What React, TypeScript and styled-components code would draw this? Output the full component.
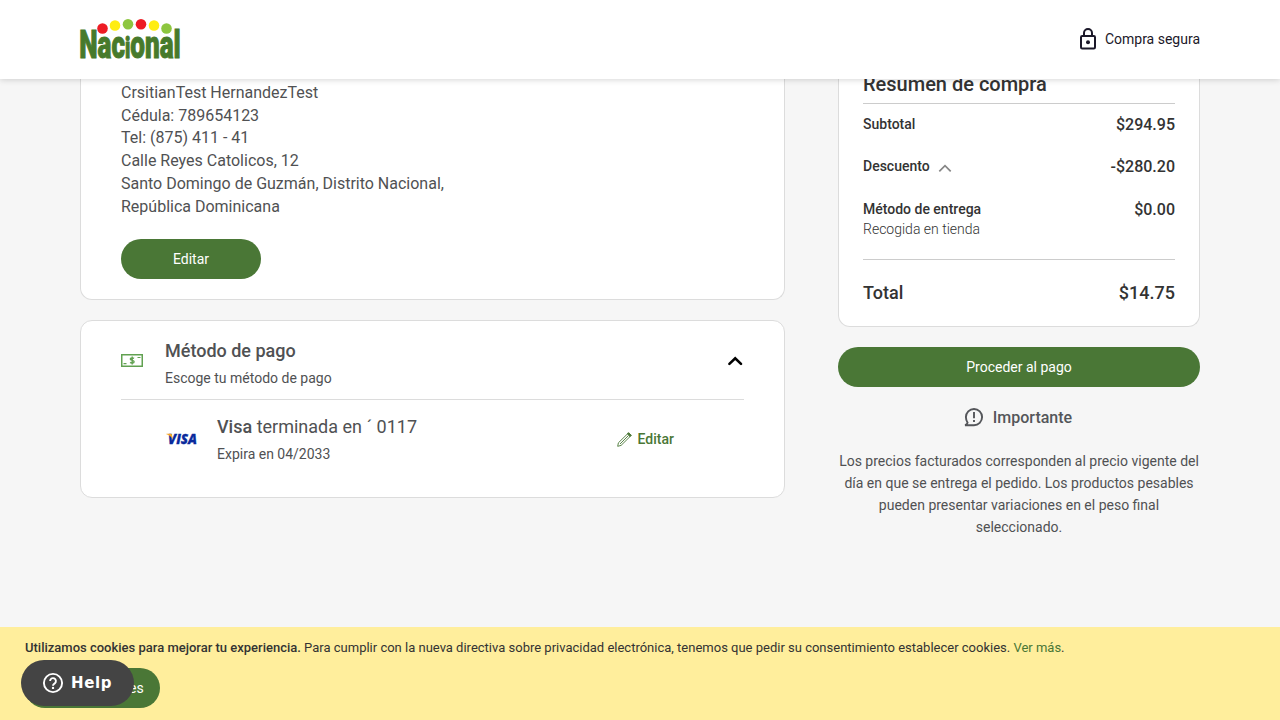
import React from 'react';
import styled, { createGlobalStyle } from 'styled-components';

const green = '#4a7736';

const GlobalStyle = createGlobalStyle`
  * { box-sizing: border-box; }
  body { margin: 0; background: #f6f6f6; color: #333; font-family: Roboto, sans-serif; font-size: 14px; }
  p, h2, h3 { margin: 0; }
  button { font: inherit; border: 0; padding: 0; cursor: pointer; }
`;

const Page = styled.div`
  height: 720px;
  overflow: hidden;
  display: flex;
  flex-direction: column;
`;

const Header = styled.header`
  position: relative;
  z-index: 2;
  flex: none;
  height: 79px;
  padding: 0 80px 2px;
  display: flex;
  justify-content: space-between;
  align-items: center;
  background: #fff;
  box-shadow: 0 1px 6px rgba(0, 0, 0, 0.16);
`;

const Secure = styled.div`
  display: flex;
  align-items: center;
  gap: 8px;
  color: #1b1829;
`;

const Content = styled.main`
  flex: 1;
  min-height: 0;
  padding: 0 80px;
  display: flex;
  justify-content: space-between;
  align-items: flex-start;
`;

const Steps = styled.div`
  width: 705px;
  display: flex;
  flex-direction: column;
  gap: 20px;
`;

const Sidebar = styled.aside`
  width: 362px;
  display: flex;
  flex-direction: column;
`;

const Card = styled.section<{ $open?: boolean }>`
  background: #fff;
  border: 1px solid #dcdcdc;
  border-top-width: ${p => (p.$open ? 0 : 1)}px;
  border-radius: ${p => (p.$open ? '0 0 12px 12px' : '12px')};
  color: #505153;
`;

const AddressCard = styled(Card)`
  height: 221px;
  padding: 2.7px 40px 20px;
  display: flex;
  flex-direction: column;
  justify-content: space-between;
  align-items: flex-start;
`;

const Address = styled.p`
  font-size: 16px;
  line-height: 22.85px;
`;

const Button = styled.button<{ $width?: string }>`
  width: ${p => p.$width ?? '100%'};
  height: 40px;
  flex: none;
  border-radius: 20px;
  background: ${green};
  color: #fff;
  font-size: 14px;
`;

const PaymentCard = styled(Card)`
  height: 178px;
  padding: 0 40px;
`;

const PaymentHead = styled.div`
  height: 79px;
  display: flex;
  align-items: center;
  border-bottom: 1px solid #dcdcdc;
`;

const HeadText = styled.div`
  flex: 1;
  padding: 5px 0 0 22px;
`;

const Heading = styled.h2`
  font-size: 18px;
  font-weight: 500;
  line-height: 26px;
`;

const Small = styled.p`
  margin-top: 4px;
  font-size: 14px;
  line-height: 20px;
`;

const PaymentRow = styled.div`
  display: flex;
  align-items: center;
  height: 78px;
  padding-left: 45px;
`;

const CardInfo = styled.div`
  flex: 1;
  padding: 0 0 1px 19px;
`;

const CardName = styled.p`
  font-size: 18px;
  line-height: 26px;
  strong { font-weight: 500; }
`;

const EditLink = styled.a`
  display: flex;
  align-items: center;
  gap: 6px;
  margin-right: 70px;
  color: ${green};
  font-weight: 500;
`;

const Summary = styled(Card)`
  height: 248px;
  padding: 0 24px;
  color: #333;
`;

const SummaryTitle = styled.h2`
  height: 25px;
  padding-top: 1px;
  border-bottom: 1px solid #ccc;
  font-size: 20px;
  font-weight: 500;
  line-height: 8px;
`;

const Line = styled.div<{ $height: number }>`
  height: ${p => p.$height}px;
  display: flex;
  justify-content: space-between;
  align-items: flex-start;
  font-weight: 500;
  line-height: 20px;
`;

const Label = styled.span`
  display: flex;
  align-items: center;
  gap: 8px;
  svg { margin-top: 3px; }
`;

const Amount = styled.span`
  font-size: 16px;
  line-height: 22px;
`;

const Delivery = styled.p`
  font-weight: 300;
`;

const Lines = styled.div`
  height: 156px;
  padding-top: 10px;
  border-bottom: 1px solid #ccc;
`;

const Total = styled.div`
  height: 64px;
  display: flex;
  justify-content: space-between;
  align-items: center;
  font-size: 18px;
  font-weight: 500;
`;

const PayAction = styled.div`
  margin-top: 20px;
`;

const Important = styled.h3`
  display: flex;
  justify-content: center;
  align-items: center;
  gap: 9px;
  height: 24px;
  margin: 18px 0 21px;
  padding-right: 2px;
  color: #54565a;
  font-size: 16px;
  font-weight: 500;
`;

const Notice = styled.p`
  color: #505153;
  line-height: 22px;
  text-align: center;
`;

const CookieBar = styled.footer`
  position: relative;
  z-index: 2;
  flex: none;
  height: 93px;
  padding: 11px 25px;
  background: #ffee9c;
  font-size: 13px;
  line-height: 20px;
  strong { font-weight: 500; }
  a { color: ${green}; }
`;

const CookieButton = styled(Button)`
  display: block;
  margin-top: 10px;
  padding-left: 1px;
`;

const HelpButton = styled.button`
  position: absolute;
  left: 21px;
  top: 33px;
  width: 113px;
  height: 46px;
  display: flex;
  align-items: center;
  gap: 7px;
  padding-left: 21px;
  border-radius: 23px;
  background: #444;
  color: #fff;
  font: 700 15px 'DejaVu Sans', sans-serif;
  letter-spacing: 0.6px;
`;

const dots = [
  { x: 22.5, y: 10.5, c: '#ed1c24' },
  { x: 35, y: 7.5, c: '#ffed12' },
  { x: 48, y: 6.2, c: '#8dc63f' },
  { x: 61, y: 6.2, c: '#ed1c24' },
  { x: 74, y: 7.5, c: '#ffed12' },
  { x: 86.5, y: 10.5, c: '#8dc63f' },
];

const Logo = () => (
  <svg width="101" height="42" viewBox="0 0 101 42" overflow="visible">
    {dots.map(d => <circle key={d.x} cx={d.x} cy={d.y} r="5.3" fill={d.c} />)}
    <text
      x="-1.2" y="40.5" textLength="172" lengthAdjust="spacingAndGlyphs"
      transform="scale(0.59 1)" fill="#477a2b" stroke="#477a2b" strokeWidth="1"
      fontFamily="Roboto, sans-serif" fontWeight="900" fontSize="39"
    >Nac<tspan fontSize="29">i</tspan>onal</text>
  </svg>
);

const LockIcon = () => (
  <svg width="18" height="22" viewBox="0 0 18 22" fill="none" stroke="#1b1829" strokeWidth="2">
    <rect x="2" y="8" width="14" height="12.5" rx="1.2" />
    <path d="M5 8V5a4 4 0 0 1 8 0v3" />
    <circle cx="9" cy="14.2" r="2" fill="#1b1829" stroke="none" />
  </svg>
);

const CashIcon = () => (
  <svg width="22" height="13" viewBox="0 0 22 13" fill="none" stroke="#61a151">
    <rect x="0.75" y="0.75" width="20.5" height="11.5" strokeWidth="1.5" />
    <path d="M16.5 3.5h3M2.500 9.700h3" strokeWidth="1.2" />
    <path d="M13 4.400c-.6-.5-3.700-.9-3.700.7 0 1.700 3.800.8 3.800 2.600 0 1.700-3.200 1.400-4 .7M11.200 2.400v8.200" strokeWidth="1.4" />
  </svg>
);

const VisaIcon = () => (
  <svg width="32" height="14" viewBox="0 0 32 14">
    <text
      x="2" y="12.3" textLength="29" lengthAdjust="spacingAndGlyphs" fill="#0a2a9c" stroke="#0a2a9c" strokeWidth="0.3"
      fontFamily="'Open Sans', sans-serif" fontStyle="italic" fontWeight="800" fontSize="14.6"
    >VISA</text>
    <path d="M.4 1.700h4.200c.8 0 1.100.4 1.300 1l1 5C5.600 4.900 3.500 3 .4 2.200z" fill="#f7a823" />
  </svg>
);

const PencilIcon = () => (
  <svg width="15" height="15" viewBox="0 0 15 15" fill="none" stroke={green} strokeWidth="0.9">
    <path d="M.7 14.300 1.400 10.800 11.600.8 14.200 3.400 4.100 13.400zM3 12l8.300-8.300" />
    <path d="M11.600.8l2.600 2.600-1.200 1.200-2.600-2.600z" fill={green} />
  </svg>
);

const AlertIcon = () => (
  <svg width="20" height="20" viewBox="0 0 20 20" fill="none" stroke="#54565a" strokeWidth="1.9">
    <path d="M1 18.200h9a8.100 8.100 0 1 0-8.100-8.100c0 2.200.8 4.200 1.700 5.600C3.400 17 2.200 17.900 1 18.200z" />
    <path d="M10 5v6.200M10 13v2" />
  </svg>
);

const HelpIcon = () => (
  <svg width="22" height="22" viewBox="0 0 22 22" fill="none" stroke="#fff" strokeWidth="1.9">
    <circle cx="11" cy="11" r="9.1" />
    <path d="M8.100 9a2.900 2.900 0 1 1 4.800 2.200c-1 .9-1.900 1.200-1.900 2.600" />
    <circle cx="11" cy="15.9" r="1.2" fill="#fff" stroke="none" />
  </svg>
);

export default function App() {
  return (
    <Page>
      <GlobalStyle />
      <Header>
        <Logo />
        <Secure><LockIcon />Compra segura</Secure>
      </Header>
      <Content>
        <Steps>
          <AddressCard $open>
            <Address>
              CrsitianTest HernandezTest<br />
              Cédula: 789654123<br />
              Tel: (875) 411 - 41<br />
              Calle Reyes Catolicos, 12<br />
              Santo Domingo de Guzmán, Distrito Nacional,<br />
              República Dominicana
            </Address>
            <Button $width="140px">Editar</Button>
          </AddressCard>
          <PaymentCard>
            <PaymentHead>
              <CashIcon />
              <HeadText>
                <Heading>Método de pago</Heading>
                <Small>Escoge tu método de pago</Small>
              </HeadText>
              <svg width="18" height="12" viewBox="0 0 18 12" fill="none" stroke="#000" strokeWidth="2.6">
                <path d="M3.400 9.900 9.200 4.300 15 9.900" strokeLinecap="round" />
              </svg>
            </PaymentHead>
            <PaymentRow>
              <VisaIcon />
              <CardInfo>
                <CardName><strong>Visa</strong> terminada en ´ 0117</CardName>
                <Small>Expira en 04/2033</Small>
              </CardInfo>
              <EditLink><PencilIcon />Editar</EditLink>
            </PaymentRow>
          </PaymentCard>
        </Steps>
        <Sidebar>
          <Summary $open>
            <SummaryTitle>Resumen de compra</SummaryTitle>
            <Lines>
              <Line $height={42}><Label>Subtotal</Label><Amount>$294.95</Amount></Line>
              <Line $height={43}>
                <Label>
                  Descuento
                  <svg width="14" height="8" viewBox="0 0 14 8" fill="none" stroke="#868686" strokeWidth="1.7">
                    <path d="M1.300 7.400 7 1.700 12.700 7.400" />
                  </svg>
                </Label>
                <Amount>-$280.20</Amount>
              </Line>
              <Line $height={50}>
                <div>Método de entrega<Delivery>Recogida en tienda</Delivery></div>
                <Amount>$0.00</Amount>
              </Line>
            </Lines>
            <Total><span>Total</span><span>$14.75</span></Total>
          </Summary>
          <PayAction><Button>Proceder al pago</Button></PayAction>
          <Important><AlertIcon />Importante</Important>
          <Notice>
            Los precios facturados corresponden al precio vigente del día en que se entrega el pedido. Los productos
            pesables pueden presentar variaciones en el peso final seleccionado.
          </Notice>
        </Sidebar>
      </Content>
      <CookieBar>
        <p>
          <strong>Utilizamos cookies para mejorar tu experiencia.</strong> Para cumplir con la nueva directiva sobre
          privacidad electrónica, tenemos que pedir su consentimiento establecer cookies. <a>Ver más</a>.
        </p>
        <CookieButton $width="135px">Permitir cookies</CookieButton>
        <HelpButton><HelpIcon />Help</HelpButton>
      </CookieBar>
    </Page>
  );
}
